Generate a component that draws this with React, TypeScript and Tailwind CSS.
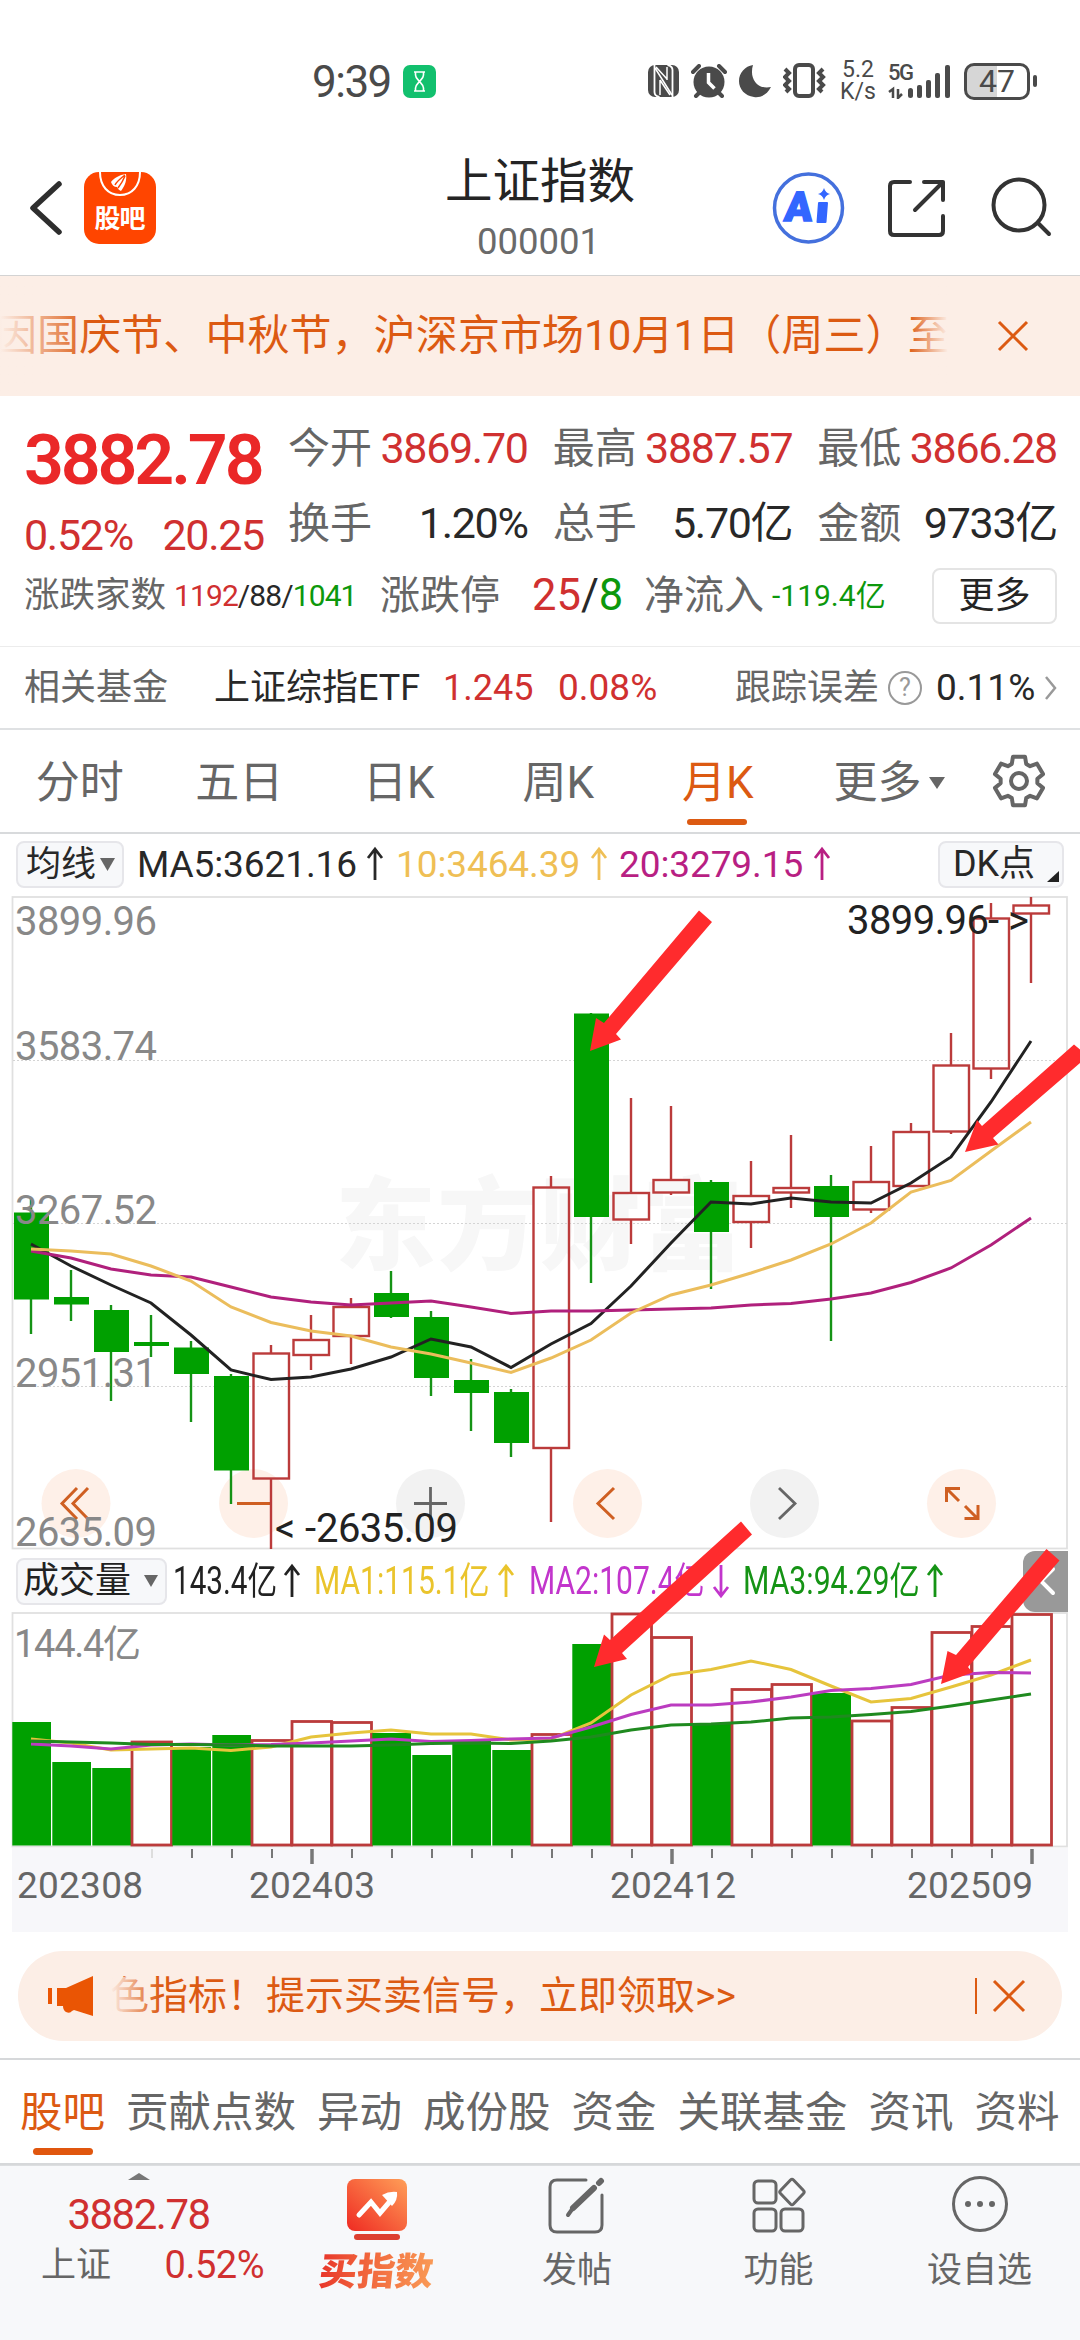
import { useState } from "react";

type Candle = {
  up: boolean;
  top: number;
  bottom: number;
  high: number;
  low: number;
};

type Volume = {
  up: boolean;
  top: number;
};

const candles: Candle[] = [
  { up: false, top: 1212.5, bottom: 1299.5, high: 1199, low: 1334 },
  { up: false, top: 1297, bottom: 1304.5, high: 1270, low: 1321 },
  { up: false, top: 1310, bottom: 1352, high: 1305, low: 1401 },
  { up: false, top: 1342, bottom: 1346, high: 1315, low: 1357 },
  { up: false, top: 1347.5, bottom: 1374, high: 1341, low: 1422 },
  { up: false, top: 1376, bottom: 1470.5, high: 1374, low: 1504 },
  { up: true, top: 1353.5, bottom: 1478.5, high: 1345, low: 1549 },
  { up: true, top: 1340, bottom: 1355, high: 1315, low: 1370 },
  { up: true, top: 1307, bottom: 1336, high: 1298, low: 1364 },
  { up: false, top: 1293, bottom: 1317, high: 1271, low: 1318 },
  { up: false, top: 1317, bottom: 1378, high: 1311, low: 1396 },
  { up: false, top: 1380, bottom: 1393, high: 1359, low: 1431 },
  { up: false, top: 1392, bottom: 1443, high: 1389, low: 1457 },
  { up: true, top: 1187.5, bottom: 1448, high: 1176, low: 1522 },
  { up: false, top: 1013.5, bottom: 1217, high: 1013, low: 1283 },
  { up: true, top: 1193, bottom: 1219.5, high: 1098, low: 1244 },
  { up: true, top: 1180, bottom: 1192.5, high: 1106, low: 1195 },
  { up: false, top: 1182, bottom: 1232, high: 1180, low: 1289 },
  { up: true, top: 1196, bottom: 1222, high: 1161, low: 1248 },
  { up: true, top: 1188, bottom: 1192.5, high: 1135, low: 1208 },
  { up: false, top: 1186, bottom: 1217, high: 1175, low: 1341 },
  { up: true, top: 1182, bottom: 1209.5, high: 1146, low: 1213 },
  { up: true, top: 1132, bottom: 1186, high: 1123, low: 1186 },
  { up: true, top: 1065.5, bottom: 1131.5, high: 1033, low: 1134 },
  { up: true, top: 918.5, bottom: 1068.5, high: 903, low: 1079 },
  { up: true, top: 905.5, bottom: 913.5, high: 897, low: 983 },
];

const ma5 = [
  1244, 1266, 1285, 1303, 1335, 1370, 1379.5, 1377, 1369, 1357, 1339, 1347,
  1367.5, 1344, 1323.5, 1286, 1243, 1202, 1204, 1198, 1202, 1203, 1183, 1157,
  1102, 1041,
];
const ma10 = [
  1249, 1251, 1254, 1266, 1281, 1307, 1322.5, 1331, 1336, 1347, 1354, 1363,
  1372.5, 1358, 1340, 1313, 1295, 1285, 1273, 1260, 1244, 1223, 1192, 1180.5,
  1151, 1122,
];
const ma20 = [
  1251, 1258, 1269, 1275, 1277, 1287, 1297, 1302, 1305, 1303, 1301, 1307,
  1313.5, 1311, 1311, 1310, 1309, 1308, 1305, 1303.5, 1299, 1293, 1282.5, 1268,
  1245, 1218,
];

const volumes: Volume[] = [
  { up: false, top: 1722 },
  { up: false, top: 1762 },
  { up: false, top: 1768 },
  { up: true, top: 1742 },
  { up: false, top: 1747 },
  { up: false, top: 1735 },
  { up: true, top: 1740.5 },
  { up: true, top: 1721.5 },
  { up: true, top: 1722.5 },
  { up: false, top: 1733 },
  { up: false, top: 1755 },
  { up: false, top: 1740 },
  { up: false, top: 1750 },
  { up: true, top: 1734.5 },
  { up: false, top: 1644 },
  { up: true, top: 1614 },
  { up: true, top: 1637.5 },
  { up: false, top: 1723 },
  { up: true, top: 1689.5 },
  { up: true, top: 1684.5 },
  { up: false, top: 1693 },
  { up: true, top: 1721 },
  { up: true, top: 1707.5 },
  { up: true, top: 1632.5 },
  { up: true, top: 1626.5 },
  { up: true, top: 1614.5 },
];

const vol1 = [
  1739, 1743, 1750, 1749, 1748, 1750.5, 1747, 1737, 1733, 1730, 1734, 1734,
  1740, 1739, 1723, 1695, 1675, 1669.5, 1661, 1669.5, 1686, 1702, 1698.5, 1687,
  1675, 1660,
];
const vol2 = [
  1744, 1746, 1749, 1745, 1744, 1745, 1744.5, 1743, 1741, 1739, 1741.5, 1740.5,
  1739, 1738, 1727, 1714.5, 1705, 1705, 1702, 1697, 1690.5, 1688.5, 1684.5,
  1675, 1672.5, 1673,
];
const vol3 = [
  1741, 1742, 1743, 1744.5, 1744.5, 1745, 1746, 1746, 1746, 1745, 1743.5, 1743,
  1743.5, 1741, 1737, 1730, 1725, 1724, 1722, 1718, 1717, 1714.5, 1711.5, 1706,
  1700, 1694,
];

const step = 40;
const centerX = (i: number) => 31 + i * step;
const toPoints = (values: number[]) =>
  values.map((y, i) => `${centerX(i)},${y}`).join(" ");

const gearPoints = Array.from({ length: 6 })
  .flatMap((_, k) =>
    [
      [-23, 18.5],
      [-14, 25],
      [14, 25],
      [23, 18.5],
    ].map(([offset, r]) => {
      const a = ((k * 60 - 90 + offset) * Math.PI) / 180;
      return `${27 + r * Math.cos(a)},${27 + r * Math.sin(a)}`;
    }),
  )
  .join(" ");

function StatusBar() {
  return (
    <div className="h-[110px] pt-[52px]">
      <div className="flex h-[58px] items-center pl-[312px] text-[#4a4a4a]">
        <span className="w-[91px] pt-[2px] text-[44px] tracking-[-1.5px]">
          9:39
        </span>
        <svg width="33" height="33" viewBox="0 0 33 33">
          <rect width="33" height="33" rx="7" fill="#12c06e" />
          <path
            d="M11 7h11M11 26h11M12.500 7v3c0 3 3 5 4 6.500c1-1.500 4-3.500 4-6.500V7M12.500 26v-3c0-3 3-5 4-6.500c1 1.500 4 3.500 4 6.500v3"
            fill="none"
            stroke="#fff"
            strokeWidth="1.600"
          />
        </svg>
        <svg
          className="ml-[212px]"
          width="31"
          height="32"
          viewBox="0 0 31 32"
        >
          <rect width="31" height="32" rx="7" fill="#4a4a4a" />
          <path
            d="M6.500 0v27q0 4 5 5M24.500 32V5q0-4-5-5"
            fill="none"
            stroke="#fff"
            strokeWidth="1.800"
          />
          <path
            d="M7 3l17 27M12 15v15M12 15l10 15M19 2v13M8 2l11 12"
            fill="none"
            stroke="#fff"
            strokeWidth="1.500"
          />
        </svg>
        <svg
          className="ml-[12px]"
          width="36"
          height="34"
          viewBox="0 0 36 34"
        >
          <circle cx="18" cy="18" r="15.500" fill="#4a4a4a" />
          <path
            d="M2 8l6-6M34 8l-6-6M8 29l-3 3M28 29l3 3"
            stroke="#4a4a4a"
            strokeWidth="4"
            strokeLinecap="round"
          />
          <path
            d="M17.500 9v9.500l6 6"
            fill="none"
            stroke="#fff"
            strokeWidth="3.500"
          />
        </svg>
        <svg
          className="ml-[12px]"
          width="32"
          height="34"
          viewBox="0 0 32 34"
        >
          <path
            d="M14 1C10 14 18 26 32 23C28 31 21 34 15 33C6 32 0 25 0 17C0 9 6 2 14 1z"
            fill="#4a4a4a"
          />
        </svg>
        <svg
          className="ml-[12px]"
          width="43"
          height="36"
          viewBox="0 0 43 36"
          fill="none"
          stroke="#4a4a4a"
        >
          <rect x="12" y="2" width="18" height="31" rx="4" strokeWidth="4" />
          <path
            d="M2 6l4 4-4 4 4 4-4 4 4 4-3 3M40 6l-4 4 4 4-4 4 4 4-4 4 3 3"
            strokeWidth="4"
          />
        </svg>
        <div className="ml-[14px] flex w-[48px] flex-col text-[23px] leading-[22px]">
          <span className="h-[22px] pl-[2px]">5.2</span>
          <span className="h-[22px]">K/s</span>
        </div>
        <div className="relative h-[36px] w-[64px]">
          <span className="absolute left-0 top-0 text-[22px] font-medium leading-[20px] tracking-[-1.500px]">
            5G
          </span>
          <svg width="64" height="36" viewBox="0 0 64 36" fill="#4a4a4a">
            <rect x="20" y="25" width="5" height="10" rx="2.500" />
            <rect x="29" y="22" width="5" height="13" rx="2" />
            <rect x="38" y="17" width="5" height="18" rx="2" />
            <rect x="47" y="10" width="5" height="25" rx="2" />
            <rect x="57" y="2" width="5" height="33" rx="2" />
            <path
              d="M1 29l4-3v9M10 26v9l4-4"
              fill="none"
              stroke="#4a4a4a"
              strokeWidth="2.500"
            />
          </svg>
        </div>
        <div className="ml-[12px] flex h-[37px] w-[66px] items-center justify-center rounded-[10px] border-[3px] border-[#4a4a4a] bg-linear-to-r from-[#d6d6d6] from-50% to-white to-50% text-[32px]">
          47
        </div>
        <div className="ml-[3px] h-[12px] w-[4px] rounded bg-[#4a4a4a]" />
      </div>
    </div>
  );
}

function Header() {
  return (
    <div className="flex h-[166px] items-center border-b border-[#d3d3d3] pt-[31px]">
      <svg className="ml-[28px]" width="36" height="56" viewBox="0 0 36 56">
        <path
          d="M31 4L5 28l26 24"
          fill="none"
          stroke="#2e2e2e"
          strokeWidth="5.500"
          strokeLinecap="round"
          strokeLinejoin="round"
        />
      </svg>
      <svg className="ml-[20px]" width="72" height="72" viewBox="0 0 72 72">
        <rect width="72" height="72" rx="15" fill="#ff4500" />
        <path
          d="M16 0c0 14 8 23 20 23s20-9 20-23"
          fill="none"
          stroke="#fff"
          strokeWidth="2"
        />
        <path
          d="M27 10c3-4 8-7 15-8c1 6-1 12-5 17c-2-1-3-2-4-4c-3 0-5-2-6-5z"
          fill="#fff"
        />
        <path
          d="M31 13c2-4 6-7 10-10M34 16c3-4 5-7 7-12"
          fill="none"
          stroke="#ff4500"
          strokeWidth="1.500"
        />
        <text
          x="10.500"
          y="56"
          fill="#fff"
          fontSize="26"
          fontWeight="600"
          textLength="51"
        >
          股吧
        </text>
      </svg>
      <div className="ml-[252px] mt-2 flex w-[264px] flex-col items-center">
        <h1 className="flex h-[60px] items-center text-[47.500px] text-[#242424]">
          上证指数
        </h1>
        <div className="flex h-[58px] items-center pr-[3px] text-[36.500px] text-[#6a6a6a]">
          000001
        </div>
      </div>
      <svg className="ml-[99px]" width="74" height="74" viewBox="0 0 74 74">
        <circle
          cx="37.500"
          cy="37"
          r="34"
          fill="none"
          stroke="#4470dd"
          strokeWidth="3.500"
        />
        <text
          x="14"
          y="50"
          fill="#3366ff"
          fontSize="41"
          fontWeight="900"
          stroke="#3366ff"
          strokeWidth="1.500"
          transform="skewX(-5) translate(3 0)"
        >
          A
        </text>
        <path
          d="M48 32h8l-1.500 19h-8z"
          fill="#3366ff"
          stroke="#3366ff"
          strokeWidth="2"
          strokeLinejoin="round"
        />
        <path
          d="M53 17q1.500 5 6 6q-4.500 1-6 6q-1.500-5-6-6q4.500-1 6-6z"
          fill="#3366ff"
        />
      </svg>
      <svg
        className="ml-[41px]"
        width="62"
        height="62"
        viewBox="0 0 62 62"
        fill="none"
        stroke="#333"
        strokeWidth="4"
        strokeLinecap="round"
        strokeLinejoin="round"
      >
        <path d="M24 5H8q-4 0-4 4v45q0 4 4 4h45q4 0 4-4V39M38 5h19v18M57 5L29 33" />
      </svg>
      <svg
        className="ml-[42px]"
        width="62"
        height="62"
        viewBox="0 0 62 62"
        fill="none"
        stroke="#333"
        strokeWidth="4"
        strokeLinecap="round"
      >
        <circle cx="29" cy="28" r="25.500" />
        <path d="M48 46l11 11" />
      </svg>
    </div>
  );
}

function Notice({ onClose }: { onClose: () => void }) {
  return (
    <div className="flex h-[120px] items-center bg-[#fceee6] text-[#dc5a12]">
      <div className="relative h-full w-[948px] overflow-hidden">
        <div className="-ml-[5px] flex h-full items-center whitespace-nowrap text-[42px] tracking-[0.080px]">
          因国庆节、中秋节，沪深京市场10月1日（周三）至
        </div>
        <div className="absolute left-0 top-0 h-full w-[90px] bg-linear-to-r from-[#fceee6] to-transparent" />
        <div className="absolute right-0 top-0 h-full w-[40px] bg-linear-to-l from-[#fceee6] to-transparent" />
      </div>
      <button onClick={onClose} className="ml-[48px]">
        <svg width="34" height="34" viewBox="0 0 34 34">
          <path d="M3 3l28 28M31 3L3 31" stroke="#dc5a12" strokeWidth="3" />
        </svg>
      </button>
    </div>
  );
}

const quotes = [
  { label: "今开", value: "3869.70", color: "text-[#d03030]" },
  { label: "最高", value: "3887.57", color: "text-[#d03030]" },
  { label: "最低", value: "3866.28", color: "text-[#d03030]" },
  { label: "换手", value: "1.20%", color: "text-[#282828]" },
  { label: "总手", value: "5.70亿", color: "text-[#282828]" },
  { label: "金额", value: "9733亿", color: "text-[#282828]" },
];

function Quote() {
  return (
    <div className="h-[250px] text-[#666]">
      <div className="flex h-[163px]">
        <div className="w-[288px] pl-[24px] pt-[26px] text-[#d03030]">
          <div className="flex h-[76px] items-center text-[70px] font-semibold tracking-[-3.200px] text-[#ea2828]">
            3882.78
          </div>
          <div className="mt-3 flex h-[51px] w-[240px] items-center justify-between text-[43px] tracking-[-1.300px]">
            <span>0.52%</span>
            <span>20.25</span>
          </div>
        </div>
        <div className="grid w-[769px] grid-cols-3 gap-x-[25px] pt-[15px]">
          {quotes.map((q) => (
            <div
              key={q.label}
              className="flex h-[75px] items-center justify-between"
            >
              <span className="text-[42px]">{q.label}</span>
              <span className={`text-[43px] tracking-[-1.300px] ${q.color}`}>
                {q.value}
              </span>
            </div>
          ))}
        </div>
      </div>
      <div className="flex h-[74px] items-center whitespace-nowrap pl-[24px]">
        <span className="w-[150px] text-[35.500px]">涨跌家数</span>
        <span className="w-[206px] text-[30px] tracking-[-0.900px] text-[#282828]">
          <span className="text-[#d03030]">1192</span>/88/
          <span className="text-[#0c980c]">1041</span>
        </span>
        <span className="w-[152px] text-[40px]">涨跌停</span>
        <span className="w-[112px] text-[43.500px] text-[#282828]">
          <span className="text-[#d03030]">25</span>/
          <span className="text-[#0c980c]">8</span>
        </span>
        <span className="w-[128px] text-[40px]">净流入</span>
        <span className="w-[160px] text-[30px] text-[#0c980c]">-119.4亿</span>
        <button className="flex h-[56px] w-[125px] items-center justify-center rounded-lg border-2 border-[#e4e4e4] text-[36px] text-[#242424]">
          更多
        </button>
      </div>
    </div>
  );
}

function RelatedFund() {
  return (
    <div className="flex h-[84px] items-center whitespace-nowrap border-b-2 border-t border-[#dfe1e3] border-t-[#ececec] pl-[24px] text-[36px] text-[#d03030]">
      <span className="w-[190px] text-[#666]">相关基金</span>
      <span className="w-[229px] text-[#282828]">上证综指ETF</span>
      <span className="w-[115px]">1.245</span>
      <span className="w-[177px] text-[37px]">0.08%</span>
      <span className="w-[153px] text-[#666]">跟踪误差</span>
      <span className="flex h-[34px] w-[34px] items-center justify-center rounded-full border-[2.500px] border-[#999] text-[25px] text-[#999]">
        ?
      </span>
      <span className="ml-[14px] w-[108px] text-[37px] text-[#282828]">
        0.11%
      </span>
      <svg width="14" height="26" viewBox="0 0 14 26">
        <path
          d="M2 2l9 11-9 11"
          fill="none"
          stroke="#999"
          strokeWidth="2.500"
        />
      </svg>
    </div>
  );
}

function PeriodTabs() {
  const [active, setActive] = useState<string>("月K");
  const periods = ["分时", "五日", "日K", "周K", "月K"];

  return (
    <div className="flex h-[104px] border-b-2 border-[#d8dadc] text-[44px] text-[#666]">
      {periods.map((p) => (
        <button
          key={p}
          onClick={() => setActive(p)}
          className={
            p === active
              ? "relative w-[159.5px] pt-[3px] text-[#dc5a12]"
              : "relative w-[159.5px] pt-[3px]"
          }
        >
          {p}
          {p === active && (
            <span className="absolute bottom-[7px] left-[49px] h-[6px] w-[60px] rounded-full bg-[#dc5a12]" />
          )}
        </button>
      ))}
      <button className="ml-[36px] flex items-center pt-[3px]">
        更多
        <svg className="ml-[7px]" width="16" height="12" viewBox="0 0 16 12">
          <path d="M0 0h16L8 12z" fill="#666" />
        </svg>
      </button>
      <button className="ml-[47px]">
        <svg
          width="54"
          height="54"
          viewBox="0 0 54 54"
          fill="none"
          stroke="#666"
          strokeWidth="4"
          strokeLinejoin="round"
        >
          <polygon points={gearPoints} />
          <circle cx="27" cy="27" r="8" />
        </svg>
      </button>
    </div>
  );
}

function Arrow({ down }: { down?: boolean }) {
  return (
    <svg
      className={down ? "shrink-0 rotate-180" : "shrink-0"}
      width="18"
      height="36"
      viewBox="0 0 18 36"
      fill="none"
      stroke="currentColor"
      strokeWidth="2.800"
    >
      <path d="M9 34V4M2 12l7-9 7 9" />
    </svg>
  );
}

function MaLegend() {
  return (
    <div className="flex h-[56px] items-center whitespace-nowrap pl-[16px] pt-[4px] text-[37px] tracking-[-0.100px] text-[#282828]">
      <button className="flex h-[47px] w-[108px] items-center rounded-lg border-2 border-[#e6e6ea] bg-[#f7f8fa] pl-[8px] text-[35px]">
        均线
        <svg className="ml-[4px]" width="15" height="13" viewBox="0 0 15 13">
          <path d="M0 0h15L7.500 13z" fill="#666" />
        </svg>
      </button>
      <span className="ml-[13px] w-[229px]">MA5:3621.16</span>
      <Arrow />
      <span className="ml-[12px] flex items-center text-[#efbf55]">
        <span className="w-[194px]">10:3464.39</span>
        <Arrow />
      </span>
      <span className="ml-[11px] flex items-center text-[#b81f83]">
        <span className="w-[194px]">20:3279.15</span>
        <Arrow />
      </span>
      <button className="relative ml-[107px] flex h-[47px] w-[126px] items-center rounded-lg border-2 border-[#e6e6ea] bg-[#f7f8fa] pl-[13px] text-[36px]">
        DK点
        <svg
          className="absolute bottom-[4px] right-[3px]"
          width="12"
          height="11"
          viewBox="0 0 12 11"
        >
          <path d="M12 0v11H0z" fill="#222" />
        </svg>
      </button>
    </div>
  );
}

const priceLabels = [
  { text: "3899.96", y: 935 },
  { text: "3583.74", y: 1060 },
  { text: "3267.52", y: 1224 },
  { text: "2951.31", y: 1387 },
  { text: "2635.09", y: 1546 },
];

function PriceChart() {
  return (
    <svg className="block" width="1080" height="660" viewBox="0 890 1080 660">
      <text
        x="335"
        y="1262"
        fontSize="101"
        fontWeight="900"
        fill="#f7f7f7"
        textLength="408"
      >
        东方财富
      </text>
      <rect
        x="12.500"
        y="897"
        width="1054.500"
        height="651.500"
        fill="none"
        stroke="#e0e0e0"
        strokeWidth="1.800"
      />
      {[1060.5, 1223.5, 1386.5].map((y) => (
        <line
          key={y}
          x1="13"
          x2="1067"
          y1={y}
          y2={y}
          stroke="#d4d4d4"
          strokeDasharray="2 2"
        />
      ))}

      {[76, 253.5, 607.5, 961.5].map((x) => (
        <circle key={x} cx={x} cy="1503.500" r="34.500" fill="#fef0e8" />
      ))}
      {[430.5, 784.5].map((x) => (
        <circle key={x} cx={x} cy="1503.500" r="34.500" fill="#f2f2f2" />
      ))}
      <g fill="none" stroke="#cf5f22" strokeWidth="3">
        <path d="M77 1488l-15 15.500 15 15.500M88 1488l-15 15.500 15 15.500" />
        <path d="M237 1503.500h33" />
        <path d="M614 1488l-16 15.500 16 15.500" />
        <path d="M946.500 1502v-13.500h13.500M947 1489l12 12M978 1505v13.500h-13.500M977 1518l-12-12" />
      </g>
      <g fill="none" stroke="#666" strokeWidth="2.800">
        <path d="M414 1503.500h33M430.500 1487v33" />
        <path d="M779 1488l16 15.500-16 15.500" />
      </g>

      {candles.map((c, i) =>
        c.up ? (
          <g key={i} fill="none" stroke="#bb3b3b" strokeWidth="2.400">
            <path
              d={`M${centerX(i)} ${c.high}V${c.top}M${centerX(i)} ${c.bottom}V${c.low}`}
            />
            <rect
              x={centerX(i) - 17.5}
              y={c.top}
              width="35.500"
              height={c.bottom - c.top}
            />
          </g>
        ) : (
          <g key={i}>
            <path
              d={`M${centerX(i)} ${c.high}V${c.low}`}
              stroke="#159315"
              strokeWidth="2.400"
            />
            <rect
              x={centerX(i) - 17}
              y={c.top}
              width="35"
              height={c.bottom - c.top}
              fill="#00a000"
            />
          </g>
        ),
      )}

      <g fill="none" strokeWidth="3">
        <polyline points={toPoints(ma5)} stroke="#222" />
        <polyline points={toPoints(ma20)} stroke="#b0207c" />
        <polyline points={toPoints(ma10)} stroke="#ebbd5c" />
      </g>

      {priceLabels.map((l) => (
        <text
          key={l.text}
          x="15"
          y={l.y}
          fontSize="40"
          fill="#888"
          textLength="142"
        >
          {l.text}
        </text>
      ))}
      <text x="847" y="933.500" fontSize="40" fill="#222" textLength="142">
        3899.96
      </text>
      <text x="988" y="933.500" fontSize="40" fill="#222" textLength="41">
        -&gt;
      </text>
      <text x="275" y="1541.500" fontSize="40" fill="#222" textLength="41">
        &lt;-
      </text>
      <text x="316" y="1541.500" fontSize="40" fill="#222" textLength="142">
        2635.09
      </text>
    </svg>
  );
}

function VolumeLegend() {
  return (
    <div className="flex h-[62px] items-center whitespace-nowrap pl-[16px] text-[38px]">
      <button className="flex h-[47px] w-[151px] items-center rounded-lg border-2 border-[#e6e6ea] bg-[#f7f8fa] pl-[5px] text-[36px] text-[#222]">
        成交量
        <svg className="ml-[13px]" width="14" height="12" viewBox="0 0 14 12">
          <path d="M0 0h14L7 12z" fill="#666" />
        </svg>
      </button>
      <span className="ml-[6px] flex w-[141px] items-center text-[#222]">
        <span className="w-[110px] origin-left scale-x-[0.78]">143.4亿</span>
        <Arrow />
      </span>
      <span className="flex w-[215px] items-center text-[#eac42c]">
        <span className="w-[183px] origin-left scale-x-[0.79]">
          MA1:115.1亿
        </span>
        <Arrow />
      </span>
      <span className="flex w-[214px] items-center text-[#c235cc]">
        <span className="w-[183px] origin-left scale-x-[0.79]">
          MA2:107.4亿
        </span>
        <Arrow down />
      </span>
      <span className="flex w-[280px] items-center text-[#159315]">
        <span className="w-[183px] origin-left scale-x-[0.795]">
          MA3:94.29亿
        </span>
        <Arrow />
      </span>
      <button className="flex h-[61px] w-[45px] items-center justify-center rounded-l-xl bg-[#999]">
        <svg width="22" height="30" viewBox="0 0 22 30">
          <path
            d="M18 3L6 15l12 12"
            fill="none"
            stroke="#fff"
            strokeWidth="4"
            strokeLinecap="round"
          />
        </svg>
      </button>
    </div>
  );
}

const dates = [
  { text: "202308", x: 17 },
  { text: "202403", x: 249 },
  { text: "202412", x: 610 },
  { text: "202509", x: 907 },
];

function VolumeChart() {
  return (
    <svg className="block" width="1080" height="320" viewBox="0 1612 1080 320">
      <rect x="12" y="1848" width="1056" height="84" fill="#f7f7fa" />
      <rect
        x="12.500"
        y="1613"
        width="1054.500"
        height="233.500"
        fill="none"
        stroke="#e0e0e0"
        strokeWidth="1.800"
      />
      {volumes.map((v, i) =>
        v.up ? (
          <rect
            key={i}
            x={12 + i * step}
            y={v.top}
            width="39.500"
            height={1845 - v.top}
            fill="#fff"
            stroke="#bb3b3b"
            strokeWidth="2.800"
          />
        ) : (
          <rect
            key={i}
            x={12.3 + i * step}
            y={v.top}
            width="38.700"
            height={1845.5 - v.top}
            fill="#00a000"
          />
        ),
      )}
      <g fill="none" strokeWidth="3">
        <polyline points={toPoints(vol1)} stroke="#e6c43c" />
        <polyline points={toPoints(vol2)} stroke="#bb3cc0" />
        <polyline points={toPoints(vol3)} stroke="#1f8a1f" />
      </g>
      {volumes.map((_, i) => {
        if (i < 3) return null;
        const major = i === 7 || i === 16 || i === 25;
        return (
          <line
            key={i}
            x1={centerX(i) + 1}
            x2={centerX(i) + 1}
            y1="1849"
            y2={major ? 1864 : 1858}
            stroke={i === 3 ? "#ddd" : "#777"}
            strokeWidth={major ? 3.5 : 2}
          />
        );
      })}
      <text x="14" y="1656.500" fontSize="38" fill="#888" textLength="127">
        144.4亿
      </text>
      {dates.map((d) => (
        <text
          key={d.text}
          x={d.x}
          y="1897.500"
          fontSize="37"
          fill="#666"
          textLength="126"
        >
          {d.text}
        </text>
      ))}
    </svg>
  );
}

function Promo({ onClose }: { onClose: () => void }) {
  return (
    <div className="mx-[18px] mt-[19px] flex h-[90px] items-center rounded-full bg-[#fceee6] pl-[29px]">
      <svg width="48" height="40" viewBox="0 0 48 40" fill="#ea5504">
        <rect x="1" y="12" width="4" height="16" />
        <path d="M10 12h9L46 0v40l-19-6-2 1q-2 3-6 1-3-2-3-6h-6z" />
      </svg>
      <div className="relative ml-[15px] w-[865px] whitespace-nowrap text-[39px] text-[#dc5a12]">
        色指标！提示买卖信号，立即领取&gt;&gt;
        <div className="absolute left-0 top-0 h-full w-[50px] bg-linear-to-r from-[#fceee6] to-transparent" />
      </div>
      <div className="h-[36px] w-[1.5px] bg-[#dc5a12]" />
      <button onClick={onClose} className="ml-[14px]">
        <svg width="36" height="36" viewBox="0 0 36 36">
          <path d="M3 3l30 30M33 3L3 33" stroke="#dc5a12" strokeWidth="3" />
        </svg>
      </button>
    </div>
  );
}

function SectionTabs() {
  const tabs = [
    "股吧",
    "贡献点数",
    "异动",
    "成份股",
    "资金",
    "关联基金",
    "资讯",
    "资料",
  ];

  return (
    <div className="mt-[17px] flex h-[107px] items-center gap-[21px] whitespace-nowrap border-b-2 border-t-2 border-[#d6d8da] pl-[20px] text-[42.500px] text-[#666]">
      {tabs.map((t, i) => (
        <div
          key={t}
          className={
            i === 0
              ? "relative flex h-full items-center pt-[3px] text-[#dc5a12]"
              : "flex h-full items-center pt-[3px]"
          }
        >
          {t}
          {i === 0 && (
            <span className="absolute bottom-[8px] left-[13px] h-[7px] w-[60px] rounded-full bg-[#e0560e]" />
          )}
        </div>
      ))}
    </div>
  );
}

function BottomBar() {
  return (
    <div className="flex h-[175px] border-t border-[#dcdee0] bg-[#f7f8fa] text-[35px] text-[#666]">
      <div className="w-[277px] text-[#d03030]">
        <div className="flex h-[14px] items-end justify-center">
          <svg width="22" height="7" viewBox="0 0 22 7">
            <path d="M11 0l11 7H0z" fill="#777" />
          </svg>
        </div>
        <div className="mt-[12px] flex h-[46px] items-center justify-center text-[42px] tracking-[-1.500px]">
          3882.78
        </div>
        <div className="mt-[6px] flex h-[42px] items-center justify-between pl-[41px] pr-[13px]">
          <span className="text-[#666]">上证</span>
          <span className="text-[38px] tracking-[-0.500px]">0.52%</span>
        </div>
      </div>
      <div className="flex w-[199px] flex-col items-center pt-[13px]">
        <svg width="62" height="62" viewBox="0 0 62 62">
          <defs>
            <linearGradient id="buy" x1="0" y1="1" x2="1" y2="0">
              <stop offset="0" stopColor="#ef2a22" />
              <stop offset="1" stopColor="#ff9f58" />
            </linearGradient>
          </defs>
          <rect x="1" width="60" height="52" rx="8" fill="url(#buy)" />
          <rect x="8" y="55" width="46" height="6" rx="3" fill="#dd3f30" />
          <path
            d="M13 36L25 23l9 11L46 20"
            fill="none"
            stroke="#fff"
            strokeWidth="5"
            strokeLinecap="round"
            strokeLinejoin="miter"
          />
          <path d="M36 16q7-4 15-3 1 8-5 14z" fill="#fff" />
        </svg>
        <span className="-skew-x-6 mt-[10px] bg-linear-to-r from-[#e8342a] to-[#f99a56] bg-clip-text text-[38px] font-black leading-[42px] text-transparent">
          买指数
        </span>
      </div>
      <div className="flex w-[202px] flex-col items-center pt-[11px]">
        <svg
          width="58"
          height="58"
          viewBox="0 0 58 58"
          fill="none"
          stroke="#666"
          strokeWidth="3"
          strokeLinecap="round"
        >
          <path d="M38 3H9q-7 0-7 7v38q0 7 7 7h38q7 0 7-7V18" />
          <path d="M25 31L46 11M51 6l2-2" strokeWidth="6" />
          <path d="M20 38l5-7" strokeWidth="4" />
        </svg>
        <span className="mt-[15px] leading-[42px]">发帖</span>
      </div>
      <div className="flex w-[201px] flex-col items-center pt-[10px]">
        <svg
          width="56"
          height="58"
          viewBox="0 0 56 58"
          fill="none"
          stroke="#666"
          strokeWidth="3"
          strokeLinejoin="round"
        >
          <rect x="3" y="5" width="22" height="22" rx="4" />
          <rect x="3" y="33" width="22" height="22" rx="4" />
          <rect x="30" y="33" width="22" height="22" rx="4" />
          <path d="M39.500 4q1.500-1.500 3 0l10 10.500q1.500 1.500 0 3l-10 10.500q-1.500 1.500-3 0l-10-10.500q-1.500-1.500 0-3z" />
        </svg>
        <span className="mt-[16px] leading-[42px]">功能</span>
      </div>
      <div className="flex w-[201px] flex-col items-center pt-[9px]">
        <svg width="58" height="58" viewBox="0 0 58 58" fill="#666">
          <circle
            cx="29"
            cy="29"
            r="26.500"
            fill="none"
            stroke="#666"
            strokeWidth="3"
          />
          <circle cx="17" cy="29" r="3" />
          <circle cx="29" cy="29" r="3" />
          <circle cx="41" cy="29" r="3" />
        </svg>
        <span className="mt-[17px] leading-[42px]">设自选</span>
      </div>
    </div>
  );
}

// Red marker arrows drawn on top of both charts
function Markers() {
  return (
    <svg
      className="pointer-events-none absolute left-0 top-0"
      width="1080"
      height="2340"
      viewBox="0 0 1080 2340"
      fill="#ff2b2d"
    >
      <polygon points="699,910.5 712,922 616,1034 621,1039.500 590,1051 596,1018 604,1023" />
      <polygon points="1074,1044.500 1088,1056 993,1138 998.500,1144.500 965,1152 977,1120 982,1126" />
      <polygon points="741,1521.500 752,1534.500 622,1653 627,1659 594,1667 604,1634.500 610,1640" />
      <polygon points="1046.500,1549 1059.500,1560.500 968,1667 972.500,1672.500 941,1684 947.500,1651 956,1655" />
    </svg>
  );
}

function App() {
  const [showNotice, setShowNotice] = useState<boolean>(true);
  const [showPromo, setShowPromo] = useState<boolean>(true);

  return (
    <div className="relative h-[2340px] w-[1080px] overflow-hidden bg-white font-[Roboto,'Noto_Sans_CJK_SC',sans-serif] leading-none">
      <StatusBar />
      <Header />
      {showNotice && <Notice onClose={() => setShowNotice(false)} />}
      <Quote />
      <RelatedFund />
      <PeriodTabs />
      <MaLegend />
      <PriceChart />
      <VolumeLegend />
      <VolumeChart />
      {showPromo && <Promo onClose={() => setShowPromo(false)} />}
      <SectionTabs />
      <BottomBar />
      <Markers />
    </div>
  );
}

export default App;
